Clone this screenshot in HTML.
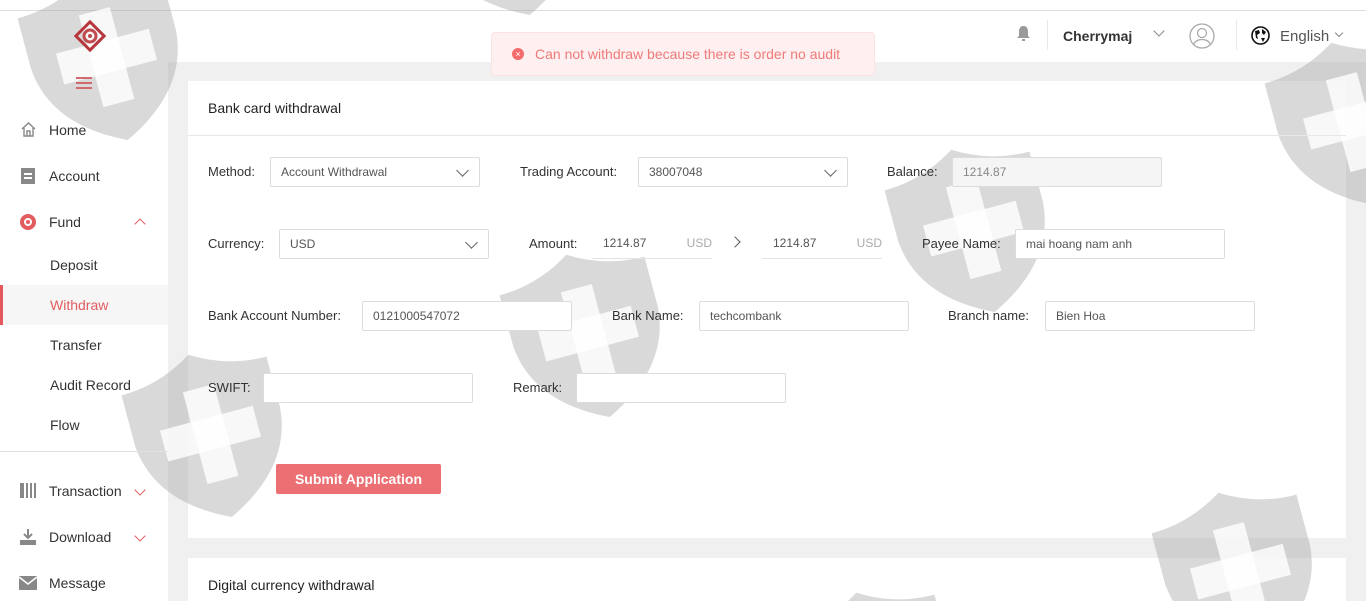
<!DOCTYPE html>
<html><head><meta charset="utf-8"><style>
*{box-sizing:border-box;margin:0;padding:0}
html,body{width:1366px;height:601px;overflow:hidden}
body{background:#f0f0f0;font-family:"Liberation Sans",Arial,sans-serif;color:#333;position:relative}
.a{position:absolute;z-index:2}
.bg{position:absolute;z-index:0}
.hdr{left:0;width:1366px;background:#fff;border-top:1px solid #ddd;top:10px;height:52px}
.top{left:0;top:0;width:1366px;height:10px;background:#fff}
.side{left:0;top:62px;width:168px;height:539px;background:#fff}
.nav{font-size:14px;color:#333}
.card{background:#fff}
.lbl{font-size:13px;color:#333}
.inp{border:1px solid #dcdcdc;border-radius:2px;background:#fff;height:30px;font-size:12px;color:#555;padding:0 10px;line-height:28px}
.chev{position:absolute;right:12px;top:8px;width:9px;height:9px;border-right:1.5px solid #666;border-bottom:1.5px solid #666;transform:rotate(45deg)}
.ul{border-bottom:1px solid #e4e4e4;height:30px;font-size:12px;line-height:28px;color:#555}
</style></head><body>
<div class="bg top"></div>
<div class="bg hdr"></div>
<div class="bg side"></div>
<div class="bg card" style="left:188px;top:81px;width:1158px;height:457px"></div>
<div class="bg card" style="left:188px;top:558px;width:1158px;height:43px"></div>
<!-- watermarks -->
<svg style="position:absolute;left:0;top:0;z-index:1;pointer-events:none" width="1366" height="601">
<defs><g id="sh"><path d="M0 22 Q40 22 75 0 Q110 22 150 22 L150 75 Q145 135 75 168 Q5 135 0 75 Z" fill="#9a9a9a" fill-opacity="0.38"/><g fill="#fff" fill-opacity="0.8"><rect x="60" y="35" width="32" height="95"/><rect x="28" y="66" width="96" height="32"/></g></g></defs>
<use href="#sh" transform="translate(30,-25) rotate(-15 75 80)"/>
<use href="#sh" transform="translate(432,-150) rotate(-15 75 80)"/>
<use href="#sh" transform="translate(1277,40) rotate(-15 75 80)"/>
<use href="#sh" transform="translate(897,147) rotate(-15 75 80)"/>
<use href="#sh" transform="translate(512,252) rotate(-15 75 80)"/>
<use href="#sh" transform="translate(134,352) rotate(-15 75 80)"/>
<use href="#sh" transform="translate(1164,490) rotate(-15 75 80)"/>
<use href="#sh" transform="translate(802,590) rotate(-15 75 80)"/>
</svg>
<!-- logo -->
<svg class="a" style="left:74px;top:20px" width="32" height="32" viewBox="0 0 32 32"><g transform="rotate(45 16 16)"><rect x="6" y="6" width="20" height="20" fill="none" stroke="#b5373d" stroke-width="3"/></g><circle cx="16" cy="16" r="6" fill="none" stroke="#c04a4f" stroke-width="3"/><circle cx="16" cy="16" r="2" fill="#c04a4f"/></svg>
<div class="a" style="left:76px;top:77px;width:16px;height:2px;background:#d06a6e;box-shadow:0 5px 0 #d06a6e,0 10px 0 #d06a6e"></div>
<!-- nav -->
<svg class="a" style="left:20px;top:121px" width="17" height="17" viewBox="0 0 17 17"><path d="M2 8 L8.5 2 L15 8 M4 7 V15 H13 V7 M7 15 V10 H10 V15" fill="none" stroke="#888" stroke-width="1.4"/></svg>
<div class="a nav" style="left:49px;top:122px">Home</div>
<div class="a" style="left:21px;top:168px;width:14px;height:16px;background:#888"><div style="margin:5px 3px;height:2px;background:#fff;box-shadow:0 4px 0 #fff"></div></div>
<div class="a nav" style="left:49px;top:168px">Account</div>
<div class="a" style="left:20px;top:214px;width:16px;height:16px;border-radius:50%;background:#e15b5f"><div style="margin:4px;width:8px;height:8px;border-radius:50%;border:2px solid #fff"></div></div>
<div class="a nav" style="left:49px;top:214px">Fund</div>
<div class="a" style="left:136px;top:220px;width:8px;height:8px;border-left:1px solid #e15b5f;border-top:1px solid #e15b5f;transform:rotate(45deg)"></div>
<div class="a nav" style="left:50px;top:257px">Deposit</div>
<div class="bg" style="left:0;top:285px;width:168px;height:40px;background:#f6f6f6;border-left:3px solid #e4585d"></div>
<div class="a nav" style="left:50px;top:297px;color:#e15b5f">Withdraw</div>
<div class="a nav" style="left:50px;top:337px">Transfer</div>
<div class="a nav" style="left:50px;top:377px">Audit Record</div>
<div class="a nav" style="left:50px;top:417px">Flow</div>
<div class="a" style="left:0;top:451px;width:168px;height:1px;background:#e0e0e0"></div>
<div class="a" style="left:20px;top:483px;width:16px;height:15px;border-left:2px solid #888;border-right:2px solid #888;background:repeating-linear-gradient(90deg,#888 0 2px,#fff 2px 4px)"></div>
<div class="a nav" style="left:49px;top:483px">Transaction</div>
<div class="a" style="left:136px;top:486px;width:8px;height:8px;border-right:1px solid #e15b5f;border-bottom:1px solid #e15b5f;transform:rotate(45deg)"></div>
<svg class="a" style="left:19px;top:528px" width="18" height="18" viewBox="0 0 18 18"><path d="M9 1 V10 M5 6 L9 10 L13 6" stroke="#888" stroke-width="2" fill="none"/><rect x="1" y="12" width="16" height="5" fill="#888"/></svg>
<div class="a nav" style="left:49px;top:529px">Download</div>
<div class="a" style="left:136px;top:532px;width:8px;height:8px;border-right:1px solid #e15b5f;border-bottom:1px solid #e15b5f;transform:rotate(45deg)"></div>
<svg class="a" style="left:19px;top:576px" width="18" height="14" viewBox="0 0 18 14"><rect width="18" height="14" fill="#888"/><path d="M0 1 L9 8 L18 1" stroke="#fff" stroke-width="1.5" fill="none"/></svg>
<div class="a nav" style="left:49px;top:575px">Message</div>
<!-- header right -->
<svg class="a" style="left:1016px;top:25px" width="15" height="17" viewBox="0 0 15 17"><path d="M7.5 1 C4 1 3 4 3 7 V11 L1 13 H14 L12 11 V7 C12 4 11 1 7.5 1Z" fill="#999"/><rect x="6" y="14" width="3" height="2" fill="#999"/></svg>
<div class="a" style="left:1047px;top:20px;width:1px;height:30px;background:#e8e8e8"></div>
<div class="a" style="left:1063px;top:28px;font-size:14px;font-weight:bold;color:#333">Cherrymaj</div>
<div class="a" style="left:1155px;top:27px;width:8px;height:8px;border-right:1.3px solid #888;border-bottom:1.3px solid #888;transform:rotate(45deg)"></div>
<svg class="a" style="left:1189px;top:23px" width="26" height="26" viewBox="0 0 26 26"><circle cx="13" cy="13" r="12" fill="none" stroke="#aaa" stroke-width="1.3"/><circle cx="13" cy="10" r="4.5" fill="none" stroke="#aaa" stroke-width="1.3"/><path d="M5 21 C7 15 19 15 21 21" fill="none" stroke="#aaa" stroke-width="1.3"/></svg>
<div class="a" style="left:1236px;top:20px;width:1px;height:30px;background:#e8e8e8"></div>
<svg class="a" style="left:1251px;top:26px" width="19" height="19" viewBox="0 0 19 19"><circle cx="9.5" cy="9.5" r="8.5" fill="#fff" stroke="#111" stroke-width="1.6"/><path d="M4 5 L8 4 L9 7 L6 9 L7 13 L5 12 Z M11 3 L15 6 L13 9 L11 7 Z M10 12 L14 12 L12 16Z" fill="#111"/></svg>
<div class="a" style="left:1280px;top:28px;font-size:15px;color:#555">English</div>
<div class="a" style="left:1336px;top:30px;width:6px;height:6px;border-right:1px solid #888;border-bottom:1px solid #888;transform:rotate(45deg)"></div>
<!-- card 1 -->
<div class="a" style="left:208px;top:100px;font-size:14px;color:#222">Bank card withdrawal</div>
<div class="a" style="left:188px;top:135px;width:1158px;height:1px;background:#e8e8e8"></div>

<div class="a lbl" style="left:208px;top:164px">Method:</div>
<div class="a inp" style="left:270px;top:157px;width:210px">Account Withdrawal<span class="chev"></span></div>
<div class="a lbl" style="left:520px;top:164px">Trading Account:</div>
<div class="a inp" style="left:638px;top:157px;width:210px">38007048<span class="chev"></span></div>
<div class="a lbl" style="left:887px;top:164px">Balance:</div>
<div class="a inp" style="left:952px;top:157px;width:210px;background:#f5f5f5;color:#888">1214.87</div>

<div class="a lbl" style="left:208px;top:236px">Currency:</div>
<div class="a inp" style="left:279px;top:229px;width:210px">USD<span class="chev"></span></div>
<div class="a lbl" style="left:529px;top:236px">Amount:</div>
<div class="a ul" style="left:592px;top:229px;width:120px;padding-left:11px">1214.87<span style="position:absolute;right:0;color:#aaa">USD</span></div>
<div class="a" style="left:731px;top:238px;width:8px;height:8px;border-right:1.5px solid #555;border-top:1.5px solid #555;transform:rotate(45deg)"></div>
<div class="a ul" style="left:762px;top:229px;width:120px;padding-left:11px">1214.87<span style="position:absolute;right:0;color:#aaa">USD</span></div>
<div class="a lbl" style="left:922px;top:236px">Payee Name:</div>
<div class="a inp" style="left:1015px;top:229px;width:210px">mai hoang nam anh</div>

<div class="a lbl" style="left:208px;top:308px">Bank Account Number:</div>
<div class="a inp" style="left:362px;top:301px;width:210px">0121000547072</div>
<div class="a lbl" style="left:612px;top:308px">Bank Name:</div>
<div class="a inp" style="left:699px;top:301px;width:210px">techcombank</div>
<div class="a lbl" style="left:948px;top:308px">Branch name:</div>
<div class="a inp" style="left:1045px;top:301px;width:210px">Bien Hoa</div>

<div class="a lbl" style="left:208px;top:380px">SWIFT:</div>
<div class="a inp" style="left:263px;top:373px;width:210px"></div>
<div class="a lbl" style="left:513px;top:380px">Remark:</div>
<div class="a inp" style="left:576px;top:373px;width:210px"></div>

<div class="a" style="left:276px;top:464px;width:165px;height:30px;background:#ec7073;border-radius:2px;color:#fff;font-size:14px;font-weight:bold;text-align:center;line-height:30px">Submit Application</div>

<div class="a" style="left:208px;top:577px;font-size:14px;color:#222">Digital currency withdrawal</div>

<!-- toast -->
<div class="a" style="z-index:3;left:491px;top:32px;width:384px;height:44px;background:#fef0f0;border:1px solid #fde2e2;border-radius:4px"></div>
<div class="a" style="z-index:4;left:512px;top:48px;width:12px;height:12px;border-radius:50%;background:#f56c6c;color:#fff;font-size:9px;line-height:12px;text-align:center">×</div>
<div class="a" style="z-index:4;left:535px;top:46px;font-size:14px;color:#f07a7a">Can not withdraw because there is order no audit</div>
</body></html>
